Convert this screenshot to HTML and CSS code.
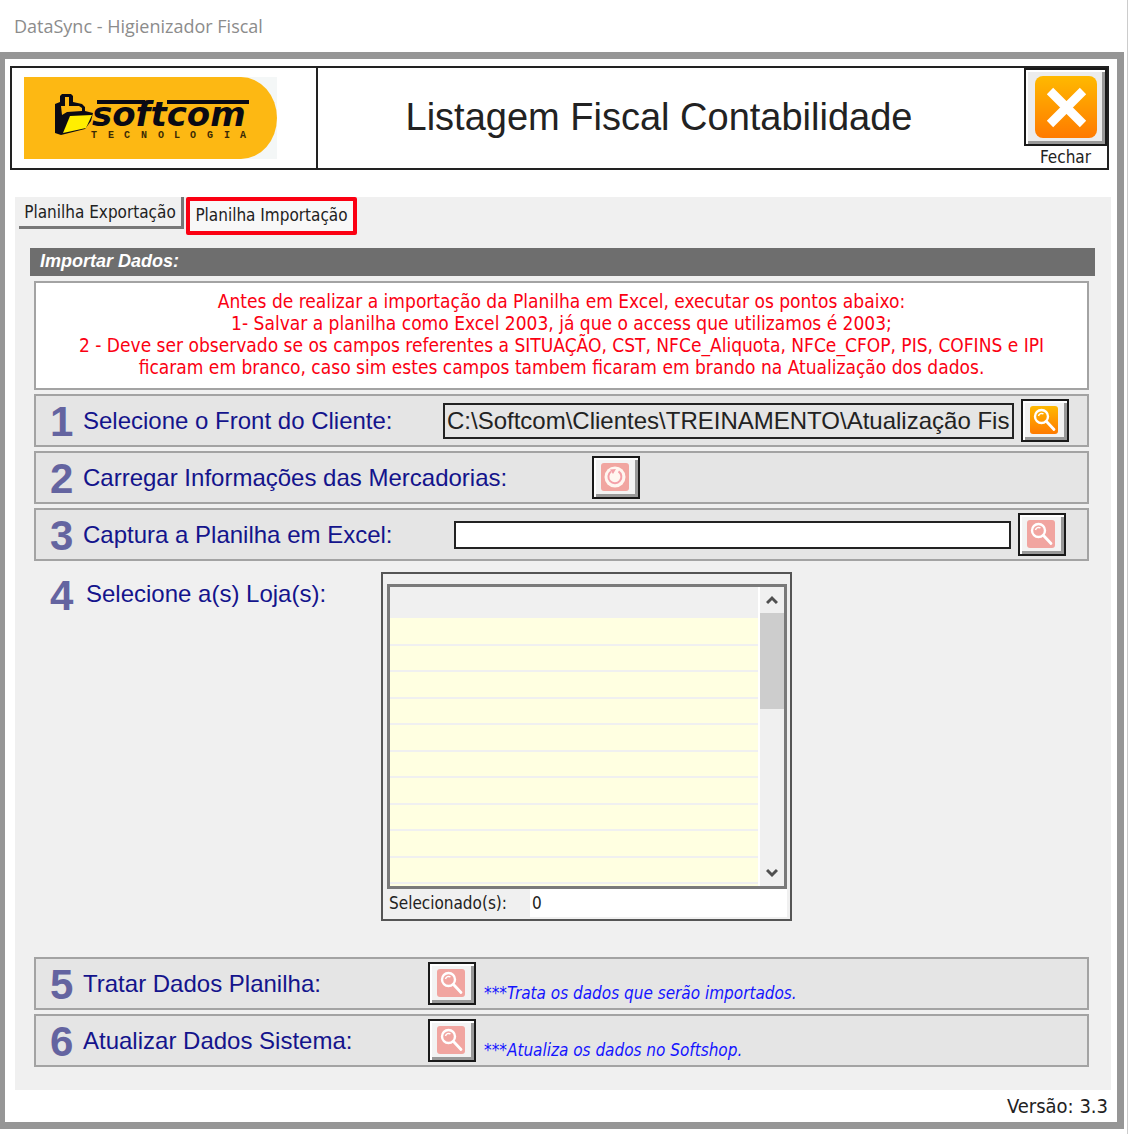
FILE: index.html
```html
<!DOCTYPE html>
<html lang="pt-BR">
<head>
    <meta charset="UTF-8">
    <meta name="viewport" content="width=device-width, initial-scale=1.0">
    <title>DataSync - Higienizador Fiscal</title>
    <link rel="stylesheet" href="styles.css">
</head>
<body>
    <!-- icons shared by the buttons -->
    <svg class="sprite" aria-hidden="true">
        <defs>
            <linearGradient id="orange" x1="0" y1="0" x2="0" y2="1">
                <stop offset="0" stop-color="#ffb900"/>
                <stop offset="1" stop-color="#ff7a00"/>
            </linearGradient>
            <symbol id="icon-search" viewBox="0 0 28 28">
                <rect width="28" height="28" rx="3"/>
                <circle cx="11.500" cy="10.500" r="6.500" fill="none" stroke="#fff" stroke-width="2.400"/>
                <path d="M8.500 10a3.200 3.200 0 0 1 5-2" fill="none" stroke="#fff" stroke-width="1.500"/>
                <path d="M16.500 15.500 24 23.500" fill="none" stroke="#fff" stroke-width="2.800" stroke-linecap="round"/>
            </symbol>
            <symbol id="icon-load" viewBox="0 0 28 28">
                <rect width="28" height="28" rx="3"/>
                <circle cx="14" cy="14" r="10.500" fill="#fff6f0"/>
                <path d="M10 8.500A6.500 6.500 0 1 0 17.500 8.300" fill="none" stroke="#f4a0a8" stroke-width="2"/>
                <path d="M9 6.500l6-.5-3 5z" fill="#f4a0a8"/>
            </symbol>
        </defs>
    </svg>

    <div class="titlebar">DataSync - Higienizador Fiscal</div>

    <div class="window">
        <header class="header">
            <div class="header-logo">
                <svg class="logo" viewBox="0 0 253 82" role="img" aria-label="Softcom Tecnologia">
                    <rect width="253" height="82" fill="#f4f7f7"/>
                    <path d="M0 0h217a36 41 0 0 1 0 82H0z" fill="#fdb813"/>
                    <path d="M31 27l5-2v-6l2-2h9l2 2v6l9 2 3 3v4l8 2-2 8-6 8-24 6-6-2z" fill="#0a0a14"/>
                    <path d="M37 29h4v-9h4v9h10l3 2v3l-15 1-5 3z" fill="#fdb813"/>
                    <path d="M46 39l22-1-6 13-23 5z" fill="#ffee00"/>
                    <path d="M73 25h48M143 25h82" stroke="#0a0a14" stroke-width="4"/>
                    <text class="logo-name" x="68" y="49">softcom</text>
                    <g class="logo-sub">
                        <text x="67" y="61">T</text>
                        <text x="84" y="61">E</text>
                        <text x="100" y="61">C</text>
                        <text x="117" y="61">N</text>
                        <text x="134" y="61">O</text>
                        <text x="150" y="61">L</text>
                        <text x="166" y="61">O</text>
                        <text x="183" y="61">G</text>
                        <text x="200" y="61">I</text>
                        <text x="216" y="61">A</text>
                    </g>
                </svg>
            </div>
            <h1 class="header-title">Listagem Fiscal Contabilidade</h1>
            <div class="header-close">
                <button class="icon-btn close-btn" id="fechar" type="button" aria-labelledby="fecharLabel">
                    <svg viewBox="0 0 62 62" aria-hidden="true">
                        <rect width="62" height="62" rx="8" fill="url(#orange)"/>
                        <path d="M15 15l33 33M48 15L15 48" stroke="#fff" stroke-width="9"/>
                    </svg>
                </button>
                <label id="fecharLabel" for="fechar">Fechar</label>
            </div>
        </header>

        <main class="panel">
            <div class="tabs" role="tablist">
                <button class="tab" type="button" role="tab" aria-selected="false">Planilha Exportação</button>
                <button class="tab active" type="button" role="tab" aria-selected="true">Planilha Importação</button>
            </div>

            <h2 class="section-title">Importar Dados:</h2>

            <div class="steps">
                <div class="notice">
                    <p>Antes de realizar a importação da Planilha em Excel, executar os pontos abaixo:</p>
                    <p>1- Salvar a planilha como Excel 2003, já que o access que utilizamos é 2003;</p>
                    <p>2 - Deve ser observado se os campos referentes a SITUAÇÃO, CST, NFCe_Aliquota, NFCe_CFOP, PIS, COFINS e IPI<br>ficaram em branco, caso sim estes campos tambem ficaram em brando na Atualização dos dados.</p>
                </div>

                <div class="step step-front">
                    <span class="number">1</span>
                    <label class="label" for="front">Selecione o Front do Cliente:</label>
                    <input class="field filled" id="front" type="text" readonly value="C:\Softcom\Clientes\TREINAMENTO\Atualização Fiscal">
                    <button class="icon-btn" type="button" aria-label="Procurar front">
                        <svg class="icon"><use href="#icon-search"/></svg>
                    </button>
                </div>

                <div class="step step-load">
                    <span class="number">2</span>
                    <label class="label" for="carregar">Carregar Informações das Mercadorias:</label>
                    <button class="icon-btn" id="carregar" type="button" disabled>
                        <svg class="icon"><use href="#icon-load"/></svg>
                    </button>
                </div>

                <div class="step step-excel">
                    <span class="number">3</span>
                    <label class="label" for="planilha">Captura a Planilha em Excel:</label>
                    <input class="field" id="planilha" type="text">
                    <button class="icon-btn" type="button" aria-label="Procurar planilha" disabled>
                        <svg class="icon"><use href="#icon-search"/></svg>
                    </button>
                </div>

                <div class="step-stores">
                    <span class="number">4</span>
                    <span class="label" id="lojasLabel">Selecione a(s) Loja(s):</span>
                    <div class="stores">
                        <div class="grid">
                            <table class="grid-table" aria-labelledby="lojasLabel">
                                <thead><tr><th></th></tr></thead>
                                <tbody>
                                    <tr><td></td></tr>
                                    <tr><td></td></tr>
                                    <tr><td></td></tr>
                                    <tr><td></td></tr>
                                    <tr><td></td></tr>
                                    <tr><td></td></tr>
                                    <tr><td></td></tr>
                                    <tr><td></td></tr>
                                    <tr><td></td></tr>
                                    <tr><td></td></tr>
                                    <tr><td></td></tr>
                                </tbody>
                            </table>
                            <div class="scrollbar">
                                <button class="scroll-btn" type="button" aria-label="Rolar para cima">
                                    <svg viewBox="0 0 12 10"><path d="M1 8l5-5 5 5"/></svg>
                                </button>
                                <div class="scroll-track"><div class="scroll-thumb"></div></div>
                                <button class="scroll-btn" type="button" aria-label="Rolar para baixo">
                                    <svg viewBox="0 0 12 10"><path d="M1 2l5 5 5-5"/></svg>
                                </button>
                            </div>
                        </div>
                        <div class="selected">
                            <label for="selecionados">Selecionado(s):</label>
                            <output id="selecionados">0</output>
                        </div>
                    </div>
                </div>

                <div class="step step-action">
                    <span class="number">5</span>
                    <label class="label" for="tratar">Tratar Dados Planilha:</label>
                    <button class="icon-btn" id="tratar" type="button" disabled>
                        <svg class="icon"><use href="#icon-search"/></svg>
                    </button>
                    <span class="hint">***Trata os dados que serão importados.</span>
                </div>

                <div class="step step-action">
                    <span class="number">6</span>
                    <label class="label" for="atualizar">Atualizar Dados Sistema:</label>
                    <button class="icon-btn" id="atualizar" type="button" disabled>
                        <svg class="icon"><use href="#icon-search"/></svg>
                    </button>
                    <span class="hint">***Atualiza os dados no Softshop.</span>
                </div>
            </div>
        </main>

        <footer class="version">Versão: 3.3</footer>
    </div>
</body>
</html>
```
FILE: styles.css
```css
* {
    margin: 0;
    padding: 0;
    box-sizing: border-box;
}

body {
    min-height: 100vh;
    font-family: "DejaVu Sans Condensed", "Noto Sans", sans-serif;
    font-size: 17px;
    color: #222;
    background: white;
    border-right: 1px solid #ccc;
}

.sprite {
    position: absolute;
    width: 0;
    height: 0;
}

.titlebar {
    height: 52px;
    padding-left: 14px;
    font: 18px/52px "Open Sans", sans-serif;
    color: #8c8c8c;
}

.window {
    margin-right: 3px;
    border: 7px solid #969696;
    border-left-width: 5px;
    padding: 7px 6px 0 5px;
}

/* header */

.header {
    display: flex;
    height: 104px;
    margin: 0 2px 27px 0;
    border: 2px solid #222;
}

.header-logo {
    width: 306px;
    padding: 9px 12px;
    border-right: 2px solid #222;
}

.logo {
    display: block;
    width: 253px;
    height: 82px;
}

.logo-name {
    font: italic bold 34px "DejaVu Sans", sans-serif;
    fill: #0a0a14;
}

.logo-sub {
    font: bold 10px "Liberation Mono", monospace;
    fill: #3a2a05;
}

.header-title {
    flex: 1;
    align-self: center;
    padding: 0 24px 2px 0;
    font: normal 38px "Liberation Sans", sans-serif;
    text-align: center;
}

.header-close {
    display: flex;
    flex-direction: column;
    align-items: center;
    line-height: 22px;
}

/* buttons */

.icon-btn {
    display: flex;
    flex: none;
    align-items: center;
    justify-content: center;
    width: 48px;
    height: 43px;
    background: #f3f3f3;
    border: 2px solid #1a1a1a;
    box-shadow: inset 2px 2px white, inset -3px -3px #999;
}

.icon-btn .icon {
    width: 28px;
    height: 28px;
    margin: 0 2px 1px 0;
    fill: url(#orange);
}

.icon-btn:disabled .icon {
    fill: #f1a5a0;
}

.close-btn {
    width: 83px;
    height: 78px;
    background: #ececec;
}

.close-btn svg {
    width: 62px;
    height: 62px;
}

/* panel */

.panel {
    margin-left: 5px;
    padding-bottom: 23px;
    background: #f0f0f0;
}

.tabs {
    display: flex;
    align-items: flex-start;
    gap: 2px;
    height: 51px;
    padding-left: 4px;
}

.tab {
    width: 165px;
    height: 32px;
    font: 17px "DejaVu Sans Condensed", "Noto Sans", sans-serif;
    color: #222;
    background: #f0f0f0;
    border: 0 solid #777;
    border-width: 0 3px 3px 0;
    white-space: nowrap;
}

.tab.active {
    width: 171px;
    height: 38px;
    padding-bottom: 3px;
    background: #f8f8f8;
    border: 4px solid #fb0012;
    border-radius: 2px;
}

.section-title {
    height: 28px;
    margin: 0 16px 5px 15px;
    padding-left: 10px;
    font: italic bold 18px/26px "Liberation Sans", sans-serif;
    color: white;
    background: #6e6e6e;
}

.steps {
    display: flex;
    flex-direction: column;
    gap: 4px;
    margin: 0 22px 0 19px;
}

.notice {
    height: 109px;
    padding-top: 7px;
    font-size: 19px;
    line-height: 22px;
    text-align: center;
    color: #fb0012;
    background: white;
    border: 2px solid #a3a3a3;
}

.step {
    display: flex;
    align-items: center;
    height: 53px;
    padding: 0 20px 0 14px;
    background: #e5e5e5;
    border: 2px solid #a3a3a3;
}

.number {
    flex: none;
    width: 33px;
    padding-top: 2px;
    font: bold 42px/44px "Liberation Sans", sans-serif;
    color: #6464a0;
}

.label {
    flex: none;
    font: 24px/30px "Liberation Sans", sans-serif;
    color: #14148c;
    white-space: nowrap;
}

.step-front .label {
    width: 360px;
}

.step-load .label {
    width: 509px;
}

.step-excel .label {
    width: 371px;
}

.step-action .label {
    width: 345px;
}

.field {
    flex: 1;
    min-width: 0;
    height: 28px;
    margin-right: 7px;
    padding: 0 2px;
    font: 24px "Liberation Sans", sans-serif;
    color: #222;
    background: white;
    border: 2px solid #222;
}

.field.filled {
    height: 36px;
    background: #e5e5e5;
}

.step-front {
    padding-right: 18px;
}

.step-excel {
    padding-right: 21px;
}

.hint {
    padding: 18px 0 0 8px;
    line-height: 24px;
    font-style: italic;
    color: #1414ff;
}

/* store list */

.step-stores {
    display: flex;
    align-items: flex-start;
    margin: 7px 0 32px;
    padding-left: 16px;
}

.step-stores .label {
    width: 298px;
    padding-top: 7px;
    padding-left: 3px;
}

.stores {
    width: 411px;
    padding: 10px 3px 2px 4px;
    border: 2px solid #555;
}

.grid {
    display: flex;
    height: 305px;
    overflow: hidden;
    background: #f0f0f0;
    border: 3px solid #7a7a7a;
}

.grid-table {
    flex: 1;
    height: 324px;
    border-collapse: collapse;
}

.grid-table th {
    height: 31px;
}

.grid-table td {
    height: 27px;
    background: #ffffe1;
    border-bottom: 2px solid #f0f0f0;
}

.grid-table tr:nth-child(even) td {
    height: 26px;
}

.scrollbar {
    display: flex;
    flex-direction: column;
    width: 26px;
    height: 299px;
    border-left: 2px solid white;
}

.scroll-btn {
    height: 26px;
    background: #f0f0f0;
    border: none;
}

.scroll-btn svg {
    width: 12px;
    height: 10px;
    fill: none;
    stroke: #505050;
    stroke-width: 3;
}

.scroll-track {
    flex: 1;
}

.scroll-thumb {
    height: 96px;
    background: #cdcdcd;
}

.selected {
    display: flex;
    height: 28px;
    line-height: 28px;
}

.selected label {
    width: 143px;
    padding-left: 2px;
}

.selected output {
    flex: 1;
    padding-left: 2px;
    background: white;
}

.version {
    height: 32px;
    padding-right: 3px;
    font-size: 20px;
    line-height: 32px;
    text-align: right;
}
```
